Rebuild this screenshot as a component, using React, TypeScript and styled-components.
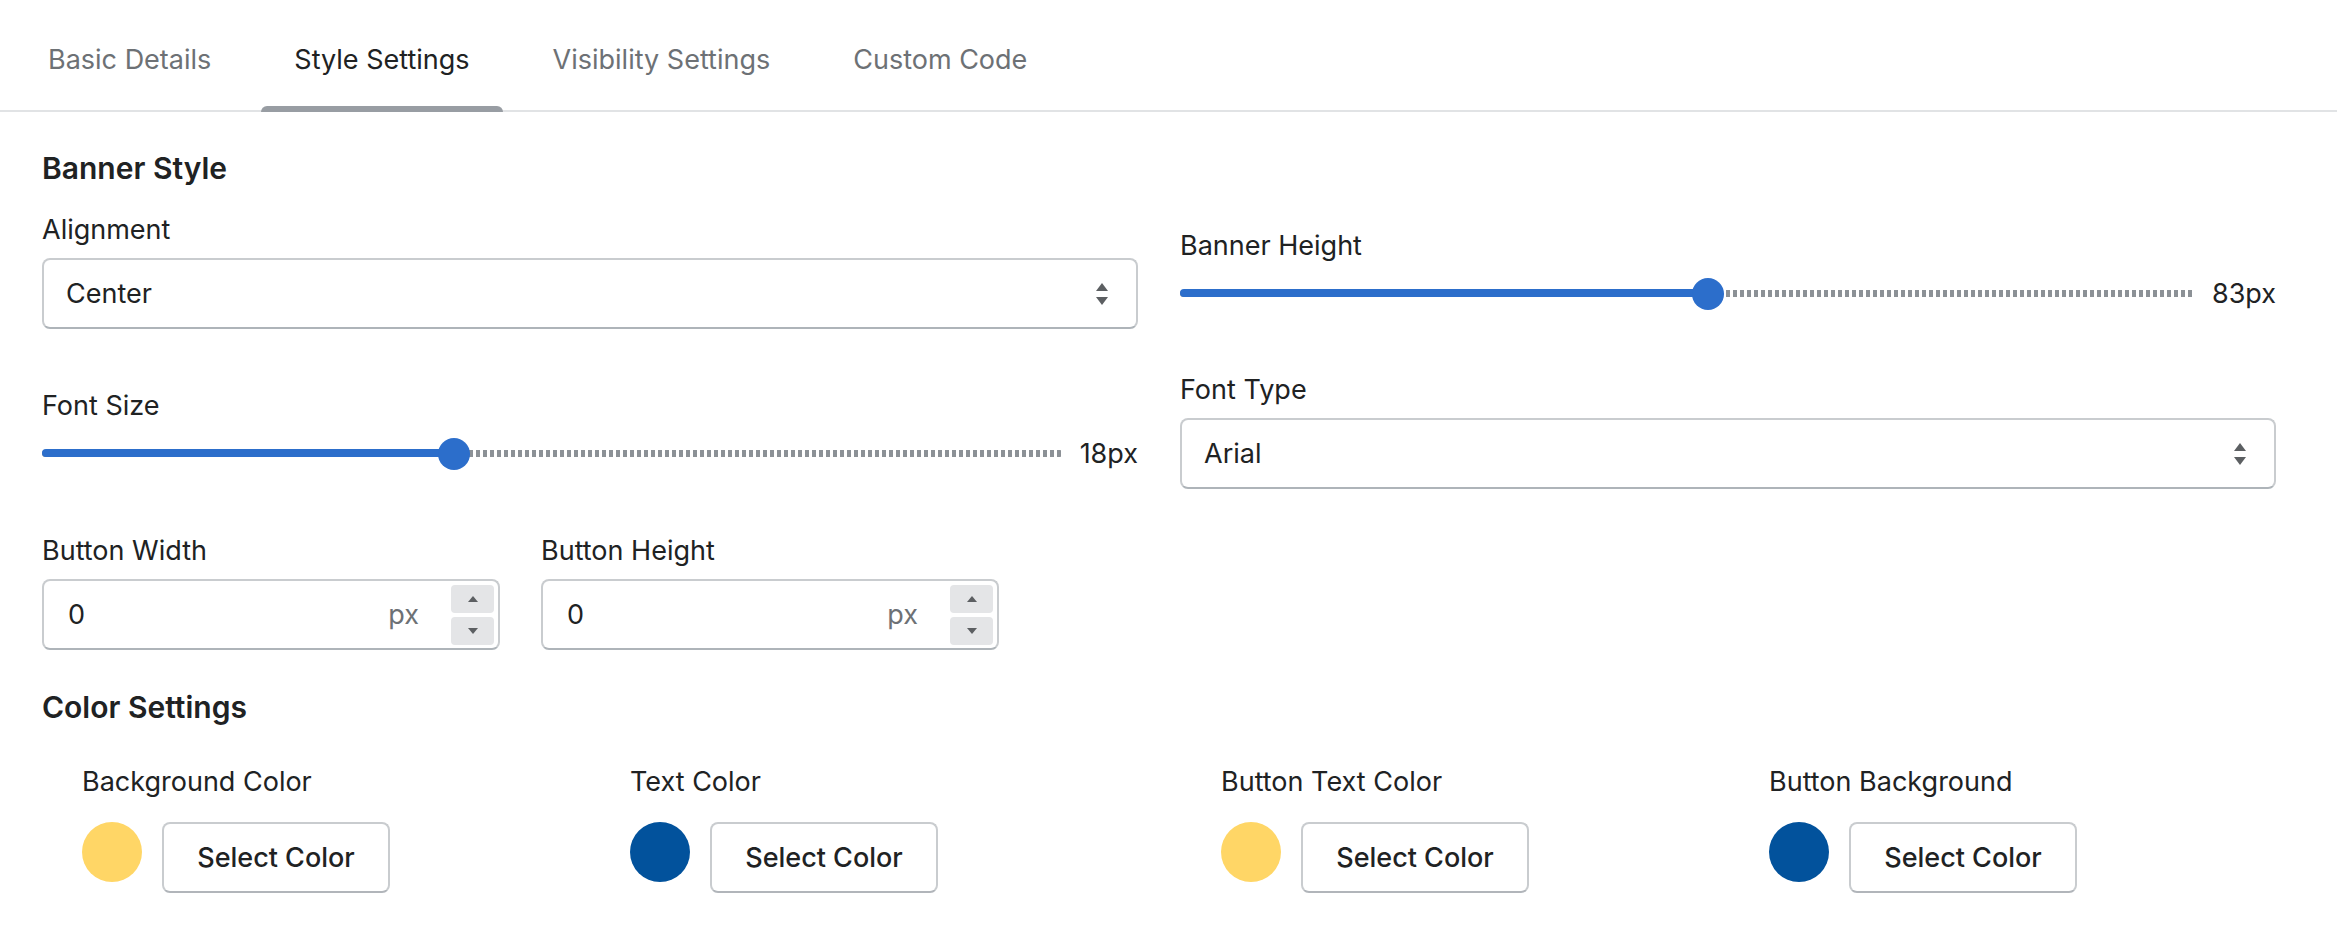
import styled, {createGlobalStyle} from 'styled-components';

const GlobalStyle = createGlobalStyle`
  * {
    box-sizing: border-box;
  }
  body {
    margin: 0;
    background: #fff;
    color: #202223;
    font-family: Inter, 'Noto Sans', sans-serif;
  }
`;

const TabBar = styled.div`
  display: flex;
  gap: 17px;
  height: 112px;
  padding-left: 15px;
  box-shadow: inset 0 -2px 0 #e1e3e5;
`;

const Tab = styled.div<{$active?: boolean}>`
  position: relative;
  padding: 40px 33px 0;
  font-size: 27px;
  line-height: 40px;
  color: ${p => (p.$active ? '#202223' : '#6d7175')};

  &::after {
    content: '';
    position: absolute;
    left: 0;
    right: 0;
    bottom: 0;
    height: 6px;
    border-radius: 6px 6px 0 0;
    background: ${p => (p.$active ? '#989da3' : 'transparent')};
  }
`;

const Content = styled.div`
  padding: 0 61px 0 42px;
`;

const SectionTitle = styled.h2<{$top: number; $bottom: number}>`
  margin: ${p => p.$top}px 0 ${p => p.$bottom}px;
  font-size: 30px;
  line-height: 40px;
  font-weight: 600;
`;

const TwoCol = styled.div`
  display: grid;
  grid-template-columns: 1fr 1fr;
  column-gap: 42px;
  align-items: center;

  & + & {
    margin-top: 41px;
  }
`;

const Field = styled.div`
  display: flex;
  flex-direction: column;
  gap: 8px;
`;

const Label = styled.div`
  font-size: 27px;
  line-height: 40px;
`;

const Select = styled.div`
  display: flex;
  align-items: center;
  justify-content: space-between;
  height: 71px;
  padding: 0 27px 0 22px;
  border: 2px solid #c9cccf;
  border-bottom-color: #aeb4b9;
  border-radius: 8px;
  font-size: 27px;
`;

const SliderRow = styled.div`
  display: flex;
  align-items: center;
  height: 40px;
`;

const Track = styled.div`
  position: relative;
  flex: 1;
  height: 7px;
  border-radius: 4px;
  background: repeating-linear-gradient(
    to right,
    #8c9196 0 4px,
    transparent 4px 7px
  );
`;

const Fill = styled.div`
  position: absolute;
  left: 0;
  top: -1px;
  height: 8px;
  border-radius: 4px;
  background: #2c6ecb;
`;

const Thumb = styled.div`
  position: absolute;
  top: 50%;
  width: 32px;
  height: 32px;
  margin: -16px 0 0 -16px;
  border-radius: 50%;
  background: #2c6ecb;
`;

const SliderValue = styled.span`
  margin-left: 17px;
  font-size: 27px;
`;

const NumberRow = styled.div`
  display: grid;
  grid-template-columns: 458px 458px;
  column-gap: 41px;
  margin-top: 42px;
`;

const NumberBox = styled.div`
  display: flex;
  align-items: center;
  height: 71px;
  padding: 0 4px 0 24px;
  border: 2px solid #c9cccf;
  border-bottom-color: #aeb4b9;
  border-radius: 8px;
  font-size: 27px;
`;

const NumberValue = styled.span`
  flex: 1;
`;

const Suffix = styled.span`
  margin-right: 32px;
  color: #6d7175;
`;

const Spinner = styled.div`
  display: flex;
  flex-direction: column;
  gap: 4px;
`;

const SpinButton = styled.div`
  display: flex;
  align-items: center;
  justify-content: center;
  width: 43px;
  height: 28px;
  border-radius: 4px;
  background: #e4e5e7;
`;

const ColorGrid = styled.div`
  display: grid;
  grid-template-columns: 548px 591px 548px auto;
  padding-left: 40px;
`;

const ColorItem = styled.div`
  display: flex;
  flex-direction: column;
  gap: 20px;
`;

const ColorRow = styled.div`
  display: flex;
  align-items: flex-start;
  gap: 20px;
`;

const Swatch = styled.div<{$color: string}>`
  width: 60px;
  height: 60px;
  border-radius: 50%;
  background: ${p => p.$color};
`;

const SelectButton = styled.button`
  width: 228px;
  height: 71px;
  padding: 0;
  border: 2px solid #c9cccf;
  border-bottom-color: #b1b5ba;
  border-radius: 8px;
  background: #fff;
  color: #202223;
  font-family: inherit;
  font-size: 27px;
  font-weight: 500;
`;

function SelectArrows() {
  return (
    <svg width="14" height="22" viewBox="0 0 14 22">
      <path d="M7 0 L13 8 H1 Z" fill="#5c5f62" />
      <path d="M7 22 L13 14 H1 Z" fill="#5c5f62" />
    </svg>
  );
}

function Caret({up}: {up?: boolean}) {
  return (
    <svg width="10" height="6" viewBox="0 0 10 6">
      <path d={up ? 'M5 0 L10 6 H0 Z' : 'M5 6 L10 0 H0 Z'} fill="#5c5f62" />
    </svg>
  );
}

function Slider({label, value, pct}: {label: string; value: string; pct: number}) {
  return (
    <Field>
      <Label>{label}</Label>
      <SliderRow>
        <Track>
          <Fill style={{width: `${pct}%`}} />
          <Thumb style={{left: `${pct}%`}} />
        </Track>
        <SliderValue>{value}</SliderValue>
      </SliderRow>
    </Field>
  );
}

function SelectField({label, value}: {label: string; value: string}) {
  return (
    <Field>
      <Label>{label}</Label>
      <Select>
        <span>{value}</span>
        <SelectArrows />
      </Select>
    </Field>
  );
}

function NumberField({label}: {label: string}) {
  return (
    <Field>
      <Label>{label}</Label>
      <NumberBox>
        <NumberValue>0</NumberValue>
        <Suffix>px</Suffix>
        <Spinner>
          <SpinButton>
            <Caret up />
          </SpinButton>
          <SpinButton>
            <Caret />
          </SpinButton>
        </Spinner>
      </NumberBox>
    </Field>
  );
}

const colors = [
  {label: 'Background Color', color: '#ffd666'},
  {label: 'Text Color', color: '#02529c'},
  {label: 'Button Text Color', color: '#ffd666'},
  {label: 'Button Background', color: '#02529c'},
];

const tabs = ['Basic Details', 'Style Settings', 'Visibility Settings', 'Custom Code'];

export default function App() {
  return (
    <>
      <GlobalStyle />
      <TabBar>
        {tabs.map(tab => (
          <Tab key={tab} $active={tab === 'Style Settings'}>
            {tab}
          </Tab>
        ))}
      </TabBar>
      <Content>
        <SectionTitle $top={36} $bottom={22}>
          Banner Style
        </SectionTitle>
        <TwoCol>
          <SelectField label="Alignment" value="Center" />
          <Slider label="Banner Height" value="83px" pct={52} />
        </TwoCol>
        <TwoCol>
          <Slider label="Font Size" value="18px" pct={40.4} />
          <SelectField label="Font Type" value="Arial" />
        </TwoCol>
        <NumberRow>
          <NumberField label="Button Width" />
          <NumberField label="Button Height" />
        </NumberRow>
        <SectionTitle $top={37} $bottom={35}>
          Color Settings
        </SectionTitle>
        <ColorGrid>
          {colors.map(c => (
            <ColorItem key={c.label}>
              <Label>{c.label}</Label>
              <ColorRow>
                <Swatch $color={c.color} />
                <SelectButton>Select Color</SelectButton>
              </ColorRow>
            </ColorItem>
          ))}
        </ColorGrid>
      </Content>
    </>
  );
}
